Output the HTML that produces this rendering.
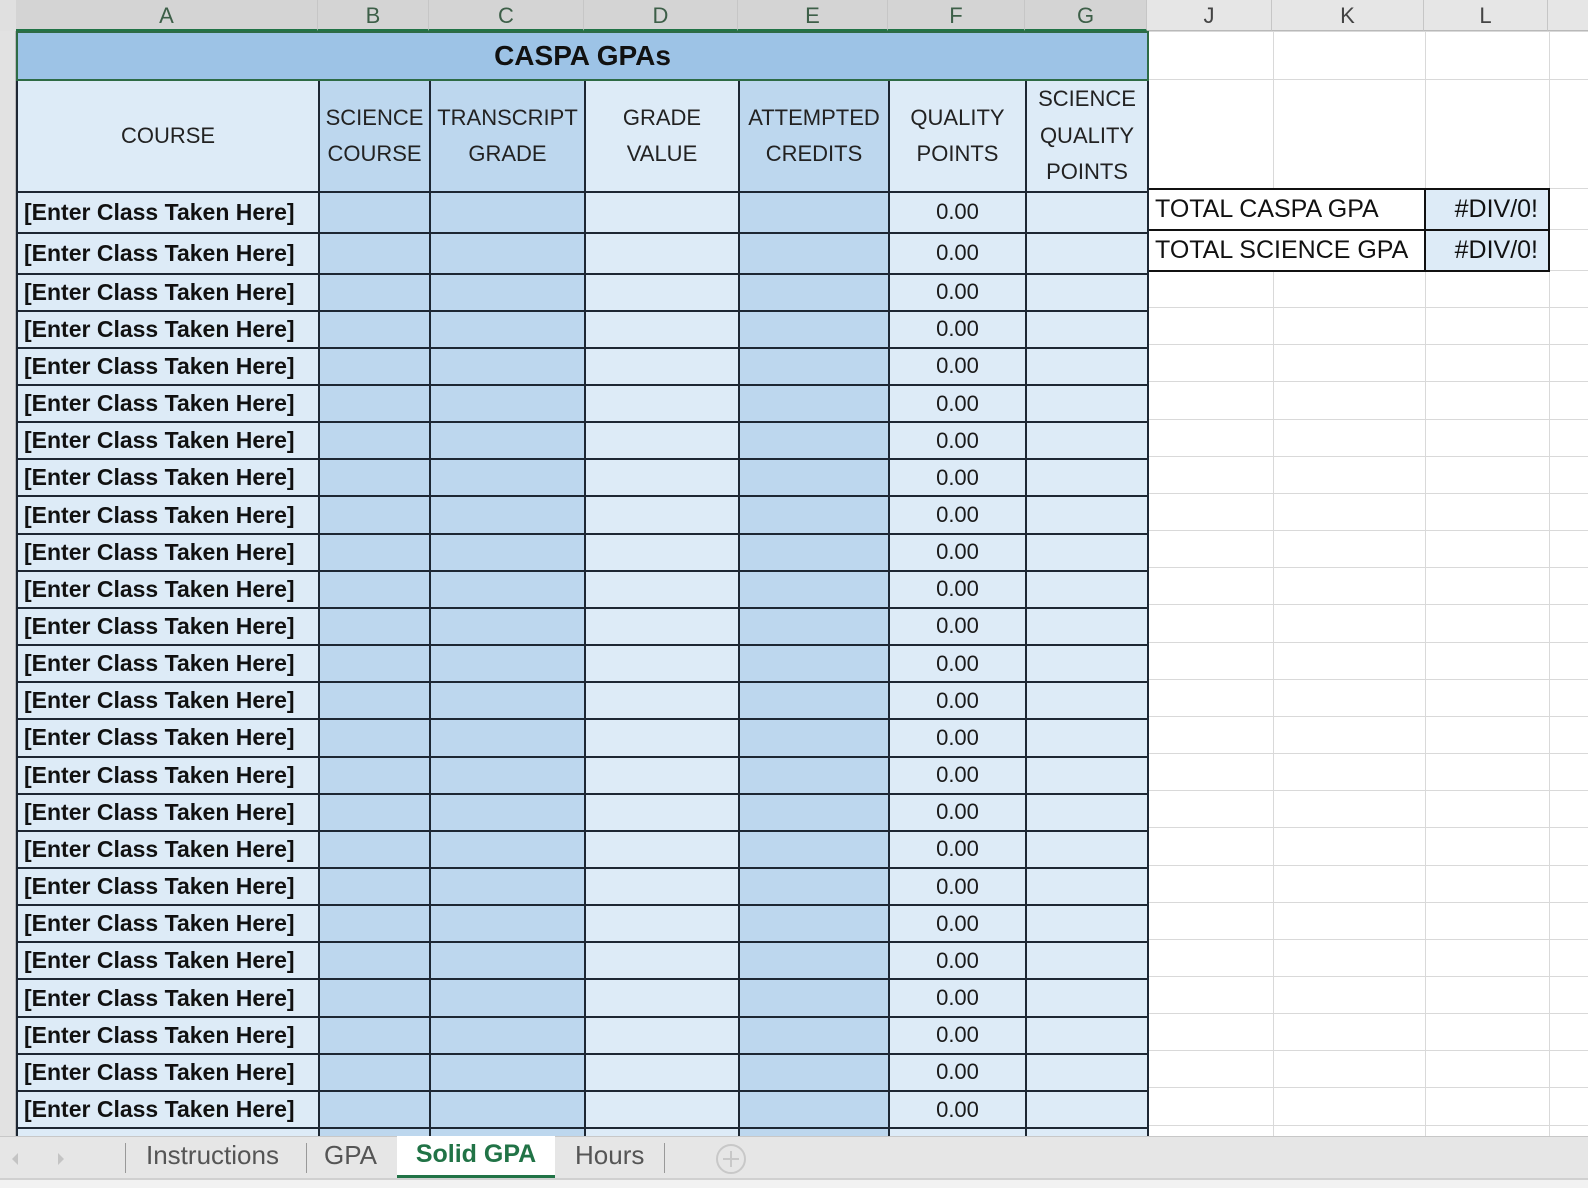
<!DOCTYPE html>
<html><head><meta charset="utf-8">
<style>
*{margin:0;padding:0;box-sizing:border-box}
body{width:1588px;height:1188px;overflow:hidden;background:#fff;position:relative;font-family:"Liberation Sans",sans-serif}
.ch{position:absolute;top:0;height:31px;border-right:1px solid #c6c6c6;border-bottom:1px solid #b9b9b9;text-align:center;font-size:22px;line-height:31px}
.sel{background:#d4d4d4;color:#3d5f48;border-bottom:2px solid #217346}
.un{background:#e6e6e6;color:#444}
#rh{position:absolute;left:0;top:31px;width:16px;height:1105px;background:#e2e2e2;border-right:1px solid #bbb}
#corner{position:absolute;left:0;top:0;width:16px;height:31px;background:#e0e0e0}
table{border-collapse:collapse;table-layout:fixed;position:absolute}
#main{left:16px;top:31px;width:1131px}
#main td{border:2px solid #1d2733;background:#ddebf7;text-align:center;color:#1a1a1a;font-size:22px;padding:0;overflow:hidden;white-space:nowrap}
#main td.d{background:#bdd7ee}
#main td.a{font-weight:bold;text-align:left;padding-left:6px;font-size:23px;color:#111}
#main tr.t td{background:#9dc3e6;font-weight:bold;font-size:28px;border:2px solid #2e6b45;color:#111}
#main tr.h td{font-size:22px;line-height:36px;color:#222}
#main tr.h td.g{line-height:36.5px}
#main tr.r td{height:37.17px}
#right{left:1147px;top:31px;width:461px}
#right td{border:1px solid #d9d9d9;padding:0;font-size:25px;color:#111;white-space:nowrap;overflow:hidden}
#right td.b{border:2px solid #111}
#right td.lb{background:#ddebf7;text-align:right;padding-right:10px}
#tabs{position:absolute;left:0;top:1136px;width:1588px;height:44px;background:#e6e6e6;border-top:1px solid #c8c8c8;border-bottom:2px solid #d0d0d0}
#sb{position:absolute;left:0;top:1180px;width:1588px;height:8px;background:#f2f2f2}
.tab{position:absolute;top:0;height:42px;line-height:36px;font-size:25px;color:#555}
.sep{position:absolute;top:6px;width:1px;height:30px;background:#999}
</style></head><body>
<div id="corner"></div>
<div class="ch sel" style="left:16px;width:302px">A</div>
<div class="ch sel" style="left:318px;width:111px">B</div>
<div class="ch sel" style="left:429px;width:155px">C</div>
<div class="ch sel" style="left:584px;width:154px">D</div>
<div class="ch sel" style="left:738px;width:150px">E</div>
<div class="ch sel" style="left:888px;width:137px">F</div>
<div class="ch sel" style="left:1025px;width:122px">G</div>
<div class="ch un" style="left:1147px;width:125px">J</div>
<div class="ch un" style="left:1272px;width:152px">K</div>
<div class="ch un" style="left:1424px;width:124px">L</div>
<div class="ch un" style="left:1548px;width:40px;border-right:none"></div>
<div id="rh"></div>

<table id="right">
<colgroup><col style="width:125px"><col style="width:152px"><col style="width:124px"><col style="width:60px"></colgroup>
<tr style="height:48px"><td></td><td></td><td></td><td></td></tr>
<tr style="height:109px"><td></td><td></td><td></td><td></td></tr>
<tr style="height:41px"><td class="b" colspan="2" style="padding-left:6px">TOTAL CASPA GPA</td><td class="b lb">#DIV/0!</td><td></td></tr>
<tr style="height:41px"><td class="b" colspan="2" style="padding-left:6px">TOTAL SCIENCE GPA</td><td class="b lb">#DIV/0!</td><td></td></tr>
<tr style="height:37.17px"><td></td><td></td><td></td><td></td></tr>
<tr style="height:37.17px"><td></td><td></td><td></td><td></td></tr>
<tr style="height:37.17px"><td></td><td></td><td></td><td></td></tr>
<tr style="height:37.17px"><td></td><td></td><td></td><td></td></tr>
<tr style="height:37.17px"><td></td><td></td><td></td><td></td></tr>
<tr style="height:37.17px"><td></td><td></td><td></td><td></td></tr>
<tr style="height:37.17px"><td></td><td></td><td></td><td></td></tr>
<tr style="height:37.17px"><td></td><td></td><td></td><td></td></tr>
<tr style="height:37.17px"><td></td><td></td><td></td><td></td></tr>
<tr style="height:37.17px"><td></td><td></td><td></td><td></td></tr>
<tr style="height:37.17px"><td></td><td></td><td></td><td></td></tr>
<tr style="height:37.17px"><td></td><td></td><td></td><td></td></tr>
<tr style="height:37.17px"><td></td><td></td><td></td><td></td></tr>
<tr style="height:37.17px"><td></td><td></td><td></td><td></td></tr>
<tr style="height:37.17px"><td></td><td></td><td></td><td></td></tr>
<tr style="height:37.17px"><td></td><td></td><td></td><td></td></tr>
<tr style="height:37.17px"><td></td><td></td><td></td><td></td></tr>
<tr style="height:37.17px"><td></td><td></td><td></td><td></td></tr>
<tr style="height:37.17px"><td></td><td></td><td></td><td></td></tr>
<tr style="height:37.17px"><td></td><td></td><td></td><td></td></tr>
<tr style="height:37.17px"><td></td><td></td><td></td><td></td></tr>
<tr style="height:37.17px"><td></td><td></td><td></td><td></td></tr>
<tr style="height:37.17px"><td></td><td></td><td></td><td></td></tr>
<tr style="height:37.17px"><td></td><td></td><td></td><td></td></tr>
</table>

<table id="main">
<colgroup><col style="width:302px"><col style="width:111px"><col style="width:155px"><col style="width:154px"><col style="width:150px"><col style="width:137px"><col style="width:122px"></colgroup>
<tr class="t" style="height:48px"><td colspan="7">CASPA GPAs</td></tr>
<tr class="h" style="height:109px"><td>COURSE</td><td class="d">SCIENCE<br>COURSE</td><td class="d">TRANSCRIPT<br>GRADE</td><td>GRADE<br>VALUE</td><td class="d">ATTEMPTED<br>CREDITS</td><td>QUALITY<br>POINTS</td><td class="g">SCIENCE<br>QUALITY<br>POINTS</td></tr>
<tr style="height:41px"><td class="a">[Enter Class Taken Here]</td><td class="d"></td><td class="d"></td><td></td><td class="d"></td><td>0.00</td><td></td></tr>
<tr style="height:41px"><td class="a">[Enter Class Taken Here]</td><td class="d"></td><td class="d"></td><td></td><td class="d"></td><td>0.00</td><td></td></tr>
<tr class="r"><td class="a">[Enter Class Taken Here]</td><td class="d"></td><td class="d"></td><td></td><td class="d"></td><td>0.00</td><td></td></tr>
<tr class="r"><td class="a">[Enter Class Taken Here]</td><td class="d"></td><td class="d"></td><td></td><td class="d"></td><td>0.00</td><td></td></tr>
<tr class="r"><td class="a">[Enter Class Taken Here]</td><td class="d"></td><td class="d"></td><td></td><td class="d"></td><td>0.00</td><td></td></tr>
<tr class="r"><td class="a">[Enter Class Taken Here]</td><td class="d"></td><td class="d"></td><td></td><td class="d"></td><td>0.00</td><td></td></tr>
<tr class="r"><td class="a">[Enter Class Taken Here]</td><td class="d"></td><td class="d"></td><td></td><td class="d"></td><td>0.00</td><td></td></tr>
<tr class="r"><td class="a">[Enter Class Taken Here]</td><td class="d"></td><td class="d"></td><td></td><td class="d"></td><td>0.00</td><td></td></tr>
<tr class="r"><td class="a">[Enter Class Taken Here]</td><td class="d"></td><td class="d"></td><td></td><td class="d"></td><td>0.00</td><td></td></tr>
<tr class="r"><td class="a">[Enter Class Taken Here]</td><td class="d"></td><td class="d"></td><td></td><td class="d"></td><td>0.00</td><td></td></tr>
<tr class="r"><td class="a">[Enter Class Taken Here]</td><td class="d"></td><td class="d"></td><td></td><td class="d"></td><td>0.00</td><td></td></tr>
<tr class="r"><td class="a">[Enter Class Taken Here]</td><td class="d"></td><td class="d"></td><td></td><td class="d"></td><td>0.00</td><td></td></tr>
<tr class="r"><td class="a">[Enter Class Taken Here]</td><td class="d"></td><td class="d"></td><td></td><td class="d"></td><td>0.00</td><td></td></tr>
<tr class="r"><td class="a">[Enter Class Taken Here]</td><td class="d"></td><td class="d"></td><td></td><td class="d"></td><td>0.00</td><td></td></tr>
<tr class="r"><td class="a">[Enter Class Taken Here]</td><td class="d"></td><td class="d"></td><td></td><td class="d"></td><td>0.00</td><td></td></tr>
<tr class="r"><td class="a">[Enter Class Taken Here]</td><td class="d"></td><td class="d"></td><td></td><td class="d"></td><td>0.00</td><td></td></tr>
<tr class="r"><td class="a">[Enter Class Taken Here]</td><td class="d"></td><td class="d"></td><td></td><td class="d"></td><td>0.00</td><td></td></tr>
<tr class="r"><td class="a">[Enter Class Taken Here]</td><td class="d"></td><td class="d"></td><td></td><td class="d"></td><td>0.00</td><td></td></tr>
<tr class="r"><td class="a">[Enter Class Taken Here]</td><td class="d"></td><td class="d"></td><td></td><td class="d"></td><td>0.00</td><td></td></tr>
<tr class="r"><td class="a">[Enter Class Taken Here]</td><td class="d"></td><td class="d"></td><td></td><td class="d"></td><td>0.00</td><td></td></tr>
<tr class="r"><td class="a">[Enter Class Taken Here]</td><td class="d"></td><td class="d"></td><td></td><td class="d"></td><td>0.00</td><td></td></tr>
<tr class="r"><td class="a">[Enter Class Taken Here]</td><td class="d"></td><td class="d"></td><td></td><td class="d"></td><td>0.00</td><td></td></tr>
<tr class="r"><td class="a">[Enter Class Taken Here]</td><td class="d"></td><td class="d"></td><td></td><td class="d"></td><td>0.00</td><td></td></tr>
<tr class="r"><td class="a">[Enter Class Taken Here]</td><td class="d"></td><td class="d"></td><td></td><td class="d"></td><td>0.00</td><td></td></tr>
<tr class="r"><td class="a">[Enter Class Taken Here]</td><td class="d"></td><td class="d"></td><td></td><td class="d"></td><td>0.00</td><td></td></tr>
<tr class="r"><td class="a">[Enter Class Taken Here]</td><td class="d"></td><td class="d"></td><td></td><td class="d"></td><td>0.00</td><td></td></tr>
</table>

<div id="tabs">
  <svg style="position:absolute;left:6px;top:12px" width="60" height="20"><polygon points="12,4 6,10 12,16" fill="#c4c4c4"/><polygon points="52,4 58,10 52,16" fill="#c4c4c4"/></svg>
  <div class="sep" style="left:125px"></div>
  <div class="tab" style="left:146px;font-size:26px">Instructions</div>
  <div class="sep" style="left:306px"></div>
  <div class="tab" style="left:324px;font-size:26px">GPA</div>
  <div class="tab" style="left:397px;width:158px;top:-1px;height:42px;background:#fff;border-bottom:3px solid #217346;color:#217346;font-weight:bold;text-align:center;font-size:25px">Solid GPA</div>
  <div class="tab" style="left:575px;font-size:26px">Hours</div>
  <div class="sep" style="left:664px"></div>
  <svg style="position:absolute;left:715px;top:6px" width="32" height="32"><circle cx="16" cy="16" r="14" fill="none" stroke="#c8c8c8" stroke-width="2"/><path d="M16 8v16M8 16h16" stroke="#c8c8c8" stroke-width="2"/></svg>
</div>
<div id="sb"></div>
</body></html>
